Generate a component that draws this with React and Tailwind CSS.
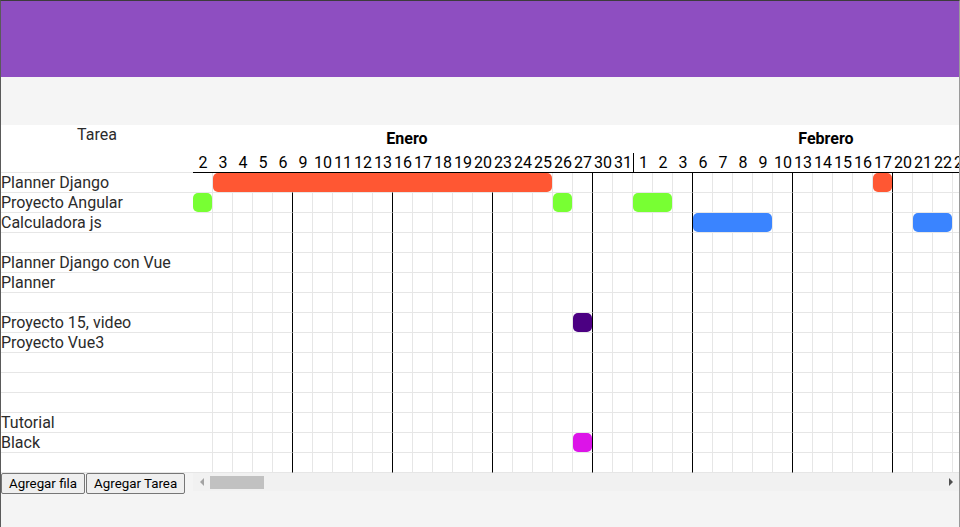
import React from "react";

const janDays = [2, 3, 4, 5, 6, 9, 10, 11, 12, 13, 16, 17, 18, 19, 20, 23, 24, 25, 26, 27, 30, 31];
const febDays = [1, 2, 3, 6, 7, 8, 9, 10, 13, 14, 15, 16, 17, 20, 21, 22, 23, 24, 27, 28];

// 2023: viernes de enero y febrero, para la linea negra de fin de semana
const days = [
  ...janDays.map((d) => ({ d, month: 0, friday: (d - 1) % 7 === 5 })),
  ...febDays.map((d) => ({ d, month: 1, friday: (d + 2) % 7 === 5 })),
];

const RED = "bg-[#ff5733]";
const GREEN = "bg-[#78ff33]";
const BLUE = "bg-[#3a84ff]";
const INDIGO = "bg-[#4b0082]";
const MAGENTA = "bg-[#dc14e8]";

const rows = [
  { name: "Planner Django", bars: [{ s: 1, e: 17, c: RED }, { s: 34, e: 34, c: RED }] },
  { name: "Proyecto Angular", bars: [{ s: 0, e: 0, c: GREEN }, { s: 18, e: 18, c: GREEN }, { s: 22, e: 23, c: GREEN }] },
  { name: "Calculadora js", bars: [{ s: 25, e: 28, c: BLUE }, { s: 36, e: 37, c: BLUE }] },
  { name: "" },
  { name: "Planner Django con Vue" },
  { name: "Planner" },
  { name: "" },
  { name: "Proyecto 15, video", bars: [{ s: 19, e: 19, c: INDIGO }] },
  { name: "Proyecto Vue3" },
  { name: "" },
  { name: "" },
  { name: "" },
  { name: "Tutorial" },
  { name: "Black", bars: [{ s: 19, e: 19, c: MAGENTA }] },
  { name: "" },
];

const GanttRow = ({ bars = [] }) => (
  <div className="grid grid-cols-[repeat(42,20px)] grid-rows-[20px]">
    {days.map((day, i) => (
      <div
        key={i}
        style={{ gridColumn: i + 1, gridRow: 1 }}
        className={`border-b border-r border-b-[#e6e6e6] ${day.friday ? "border-r-black" : "border-r-[#e6e6e6]"}`}
      />
    ))}
    {bars.map((b, i) => (
      <div
        key={"b" + i}
        style={{ gridColumn: `${b.s + 1} / ${b.e + 2}`, gridRow: 1 }}
        className={`h-[19px] mr-px rounded-[5px] ${b.c}`}
      />
    ))}
  </div>
);

const App = () => {
  return (
    <div className="h-[527px] overflow-hidden bg-[#f4f4f4] border-t border-l border-r border-t-[#3c3c3c] border-l-[#5a5a5a] border-r-[#9a9a9a] font-['Roboto',sans-serif] text-[16px]">
      <div className="h-[76px] bg-[#8e4ec1]" />
      <div className="h-[48px] bg-[#f5f5f5]" />

      <div className="flex bg-white">
        <div className="w-[192px] shrink-0 text-[#2b2b2b]">
          <div className="h-[48px] border-b border-[#e6e6e6] text-center leading-[19px]">Tarea</div>
          {rows.map((r, i) => (
            <div key={i} className="h-[20px] border-b border-[#e6e6e6] leading-[20px] whitespace-nowrap">
              {r.name}
            </div>
          ))}
        </div>

        <div className="flex-1 min-w-0 overflow-hidden text-black">
          <div className="w-max border-b border-black">
            <div className="flex h-[28px] pt-[4px] leading-[20px] font-bold">
              <div className="w-[440px] pr-3 text-center">Enero</div>
              <div className="w-[400px] pr-[14px] text-center">Febrero</div>
            </div>
            <div className="flex h-[19px] leading-[20px]">
              {days.map((day, i) => (
                <div
                  key={i}
                  className={`w-[20px] shrink-0 text-center ${day.month === 1 && day.d === 1 ? "border-l border-black" : ""}`}
                >
                  {day.d}
                </div>
              ))}
            </div>
          </div>
          {rows.map((r, i) => (
            <GanttRow key={i} bars={r.bars} />
          ))}
        </div>
      </div>

      <div className="flex">
        <div className="w-[192px] shrink-0 flex gap-px text-[13.33px] text-black">
          <button className="h-[21px] px-[7px] border border-[#767676] rounded-[2px] bg-[#efefef] leading-[17px]">
            Agregar fila
          </button>
          <button className="h-[21px] px-[7px] border border-[#767676] rounded-[2px] bg-[#efefef] leading-[17px]">
            Agregar Tarea
          </button>
        </div>
        <div className="flex-1 h-[18px] bg-[#f1f1f1] flex items-start">
          <div className="w-[17px] h-[18px] flex items-center justify-center">
            <div className="w-0 h-0 border-y-[4px] border-y-transparent border-r-[4px] border-r-[#a3a3a3]" />
          </div>
          <div className="mt-[3px] w-[54px] h-[13px] bg-[#c1c1c1]" />
          <div className="flex-1" />
          <div className="w-[17px] h-[18px] flex items-center justify-center">
            <div className="w-0 h-0 border-y-[4px] border-y-transparent border-l-[4px] border-l-[#505050]" />
          </div>
        </div>
      </div>
    </div>
  );
};

export default App;
